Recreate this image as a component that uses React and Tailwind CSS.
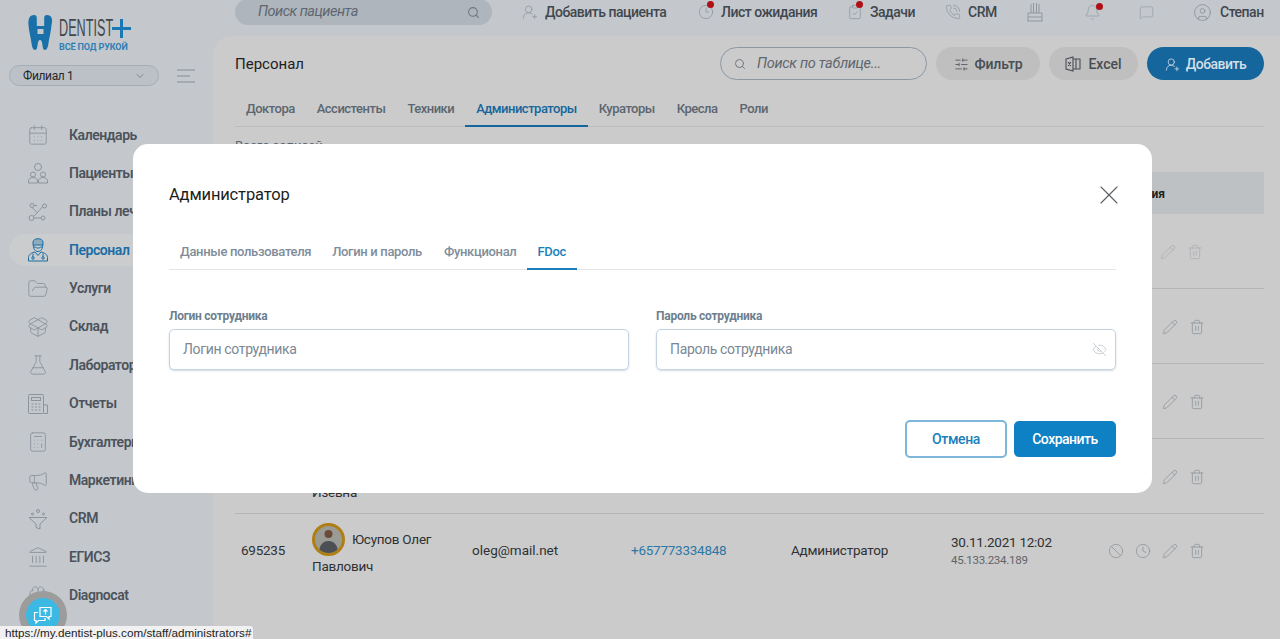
import { Search, ChevronDown, X, EyeOff, SlidersHorizontal, Pencil, Trash2, Ban, Clock, UserRoundPlus, Clock3, ClipboardCheck, PhoneCall, Bell, MessageSquare, CircleUser, CalendarDays, FolderOpen, PackageOpen, FlaskConical, Calculator, Megaphone, Landmark, Brain } from "lucide-react";

// иконки, которых нет в пакете
const PatientsIcon = (props) => (
  <svg width="22" height="22" viewBox="0 0 22 22" fill="none" stroke="currentColor" strokeWidth="1" {...props}>
    <circle cx="11" cy="5" r="3.500" />
    <circle cx="6" cy="12.500" r="2.500" />
    <circle cx="16" cy="12.500" r="2.500" />
    <path d="M1.500 21v-2c0-2 2-3.500 4.500-3.500s4.500 1.500 4.500 3.500v2zM11.500 21v-2c0-2 2-3.500 4.500-3.500s4.500 1.500 4.500 3.500v2z" />
  </svg>
);

const PlansIcon = (props) => (
  <svg width="22" height="22" viewBox="0 0 22 22" fill="none" stroke="currentColor" strokeWidth="1" {...props}>
    <circle cx="5" cy="4.500" r="2" />
    <circle cx="17.500" cy="5" r="2" />
    <circle cx="4.500" cy="17" r="2.500" />
    <circle cx="16" cy="17" r="2" />
    <path d="M7 4.500h3M15.500 6 6.500 15.500M7 17h7M5 6.500l5 5" />
  </svg>
);

const StaffIcon = (props) => (
  <svg width="22" height="24" viewBox="0 0 22 24" fill="none" stroke="currentColor" strokeWidth="1.300" {...props}>
    <path d="M6 7V4c0-2 2.500-3.300 5-3.300S16 2 16 4v3z" fill="currentColor" fillOpacity="0.35" />
    <path d="M6.300 7c0 4 2 6.500 4.700 6.500S15.700 11 15.700 7" />
    <path d="M6 9h2.500l1 1h3l1-1H16" />
    <path d="M1.500 23v-3.500c0-3 3.500-5 6.500-5.500l3 3.500 3-3.500c3 .5 6.500 2.500 6.500 5.500V23z" />
    <path d="M6 15.500V19M16 15.500V19" />
    <circle cx="6" cy="20" r="1.200" />
    <circle cx="16" cy="20" r="1.200" />
  </svg>
);

const ReportIcon = (props) => (
  <svg width="22" height="22" viewBox="0 0 22 22" fill="none" stroke="currentColor" strokeWidth="1" {...props}>
    <rect x="1.500" y="1.500" width="15" height="19" rx="1" />
    <rect x="4.500" y="4.500" width="9" height="3" />
    <path d="M4.500 11h2M8 11h2M11.500 11h2M4.500 14h2M8 14h2M11.500 14h2M4.500 17h2M8 17h2M11.500 17h2M16.500 12h4v8.500h-4" />
  </svg>
);

const FunnelIcon = (props) => (
  <svg width="22" height="22" viewBox="0 0 22 22" fill="none" stroke="currentColor" strokeWidth="1" {...props}>
    <path d="M2 9.500h18l-7 6.500v5l-4-1.500V16z" />
    <circle cx="11" cy="3" r="1.500" />
    <circle cx="5.500" cy="6" r="1" />
    <circle cx="16.500" cy="6" r="1" />
  </svg>
);

const CakeIcon = (props) => (
  <svg width="18" height="20" viewBox="0 0 18 20" fill="none" stroke="currentColor" strokeWidth="1" {...props}>
    <path d="M1.500 19h15M2 19v-8h14v8M2 15h14M5 11V2M7.500 11V1M10.500 11V1M13 11V2" />
  </svg>
);

const ExcelIcon = (props) => (
  <svg width="16" height="16" viewBox="0 0 16 16" fill="none" stroke="currentColor" strokeWidth="1.100" {...props}>
    <path d="M1 3l7-2v14l-7-2zM8 3h7v10H8M3.200 6l2.500 4M5.700 6l-2.500 4M11 3v10" />
  </svg>
);

const ChatIcon = (props) => (
  <svg width="20" height="20" viewBox="0 0 20 20" fill="none" stroke="currentColor" strokeWidth="1.200" {...props}>
    <path d="M7 2.500h11v9h-2v2.500l-2.500-2.500H7z" />
    <path d="M5 7.500H1.500v8h1.500v2.500l2.500-2.500h6.500v-2.500" />
    <path d="M12.500 4.500v5M10.500 6.500l2-2 2 2" />
  </svg>
);

const menu = [
  { label: "Календарь", icon: CalendarDays },
  { label: "Пациенты", icon: PatientsIcon },
  { label: "Планы лечения", icon: PlansIcon },
  { label: "Персонал", icon: StaffIcon, active: true },
  { label: "Услуги", icon: FolderOpen },
  { label: "Склад", icon: PackageOpen },
  { label: "Лаборатории", icon: FlaskConical },
  { label: "Отчеты", icon: ReportIcon },
  { label: "Бухгалтерия", icon: Calculator },
  { label: "Маркетинг", icon: Megaphone },
  { label: "CRM", icon: FunnelIcon },
  { label: "ЕГИСЗ", icon: Landmark },
  { label: "Diagnocat", icon: Brain },
];

const topLinks = [
  { label: "Добавить пациента", icon: UserRoundPlus, w: "w-[176px]" },
  { label: "Лист ожидания", icon: Clock3, dot: true, w: "w-[149px]" },
  { label: "Задачи", icon: ClipboardCheck, dot: true, w: "w-[98px]" },
  { label: "CRM", icon: PhoneCall, w: "w-[81px]" },
];

const RowActions = ({ full, pale }) => (
  <div className={`flex items-center justify-end gap-[11px] ${pale ? "opacity-50 pr-[2px]" : ""}`}>
    {full && <Ban size={16} className="text-[#8f979f]" strokeWidth={1.25} />}
    {full && <Clock size={16} className="text-[#8f979f]" strokeWidth={1.25} />}
    <Pencil size={16} className="text-[#8f979f]" strokeWidth={1.25} />
    <Trash2 size={16} className="text-[#8f979f]" strokeWidth={1.25} />
  </div>
);

const Avatar = () => (
  <span className="inline-flex w-[33px] h-[33px] rounded-full border-[3px] border-[#b07f14] bg-[#9b9b96] items-end justify-center overflow-hidden mr-[7px]">
    <svg width="27" height="27" viewBox="0 0 27 27">
      <circle cx="13.500" cy="8" r="4" fill="#6b4a3a" />
      <path d="M4 27c0-8 4-12 9.500-12S23 19 23 27z" fill="#4c5055" />
    </svg>
  </span>
);

const Row = ({ pale, name }) => (
  <div className="h-[75px] border-b border-[#b5b5b5] flex items-center justify-between pr-[59px] pt-[2px]">
    <div className="ml-[77px] mt-[31px] text-[13.500px] tracking-[-0.25px] text-[#2f3133]">{name}</div>
    <RowActions pale={pale} />
  </div>
);

const Field = ({ label, children }) => (
  <div>
    <div className="text-[12px] font-bold tracking-[-0.25px] text-[#6e7f8f] leading-[16px] mb-[5px]">{label}</div>
    <div className="h-[41px] border border-[#c5d3e0] rounded-[5px] pl-[13px] pr-[8px] flex items-center justify-between text-[14px] tracking-[-0.35px] text-[#7b8894] shadow-[0_1px_2px_rgba(80,110,140,0.25)]">
      <span>{label}</span>
      {children}
    </div>
  </div>
);

export default function App() {
  return (
    <div style={{ fontFamily: 'Roboto, sans-serif' }} className="relative h-[639px] w-[1280px] overflow-hidden bg-[#c4c8cd] flex">
      {/* боковое меню */}
      <aside className="w-[213px] shrink-0 pl-[9px]">
        <div className="pl-[19px] pt-[15px] h-[65px] flex items-start gap-[6px]">
          <svg width="25" height="35" viewBox="0 0 25 35">
            <path d="M6 0C1.500 0 0 4 .5 10c.5 7 2 11 3 18 .5 4 1.500 7 3.500 7s2.300-3 2.700-6c.3-2 .8-4 2.300-4s2 2 2.300 4c.4 3 .7 6 2.700 6s3-3 3.500-7c1-7 2.500-11 3-18C25 4 23.500 0 19 0c-2 0-2.800 1-2.800 3v8H8.800V3C8.800 1 8 0 6 0z" fill="#1a70a8" />
            <rect x="9.500" y="14" width="6" height="5" fill="#c4c8cd" />
          </svg>
          <div className="leading-none">
            <div className="flex items-center h-[22px] mt-[2px]">
              <div className="w-[53px] text-[23px] text-[#43474c] leading-[22px] whitespace-nowrap origin-left scale-x-[0.55]" style={{ fontFamily: '"Liberation Sans", sans-serif' }}>DENTIST</div>
              <svg width="19" height="19" viewBox="0 0 19 19">
                <path d="M8 0h3v8h8v3h-8v8H8v-8H0V8h8z" fill="#1a78b4" />
              </svg>
            </div>
            <div className="text-[9px] font-bold text-[#2e7fb5] tracking-[-0.1px] mt-[4px] whitespace-nowrap">ВСЁ ПОД РУКОЙ</div>
          </div>
        </div>
        <div className="flex items-center">
          <div className="w-[150px] h-[21px] rounded-full border border-[#a4acb5] bg-[#bcc1c8] pl-[13px] pr-[12px] flex items-center justify-between text-[12px] tracking-[-0.35px] text-[#25282b]">
            Филиал 1
            <ChevronDown size={12} className="text-[#7d858d]" />
          </div>
          <div className="ml-[18px] w-[18px] flex flex-col gap-[4px]">
            <span className="h-[2px] bg-[#a3aab2]" />
            <span className="h-[2px] bg-[#a3aab2] w-[13px]" />
            <span className="h-[2px] bg-[#a3aab2]" />
          </div>
        </div>
        <nav className="mt-[33px]">
          {menu.map((item) => (
            <div key={item.label} className={`h-[32px] mb-[6.400px] rounded-l-full flex items-center pl-[18px] gap-[20px] text-[14px] font-semibold tracking-[-0.45px] whitespace-nowrap ${item.active ? "bg-[#cacccd] text-[#1a6ea6]" : "text-[#4c535b]"}`}>
              <item.icon size={22} strokeWidth={1} className={item.active ? "text-[#1a6ea6]" : "text-[#8b939c]"} />
              {item.label}
            </div>
          ))}
        </nav>
      </aside>

      <div className="flex-1 min-w-0 flex flex-col">
        {/* верхняя панель */}
        <header className="h-[36px] shrink-0 pl-[22px] flex items-start">
          <div className="w-[257px] h-[26px] rounded-full -mt-[1px] bg-[#aeb5bc] pl-[23px] pr-[12px] flex items-center justify-between text-[14.500px] tracking-[-0.5px] italic text-[#5e6670]">
            Поиск пациента
            <Search size={13} className="text-[#6f7780]" />
          </div>
          <div className="ml-[30px] flex items-center h-[24px] text-[14px] font-medium tracking-[-0.5px] text-[#41474e]">
            {topLinks.map((l) => (
              <div key={l.label} className={`relative flex items-center gap-[7px] whitespace-nowrap ${l.w}`}>
                <l.icon size={16} strokeWidth={1} className="text-[#868e97]" />
                {l.dot && <span className="absolute left-[9px] -top-[1px] w-[7px] h-[7px] rounded-full bg-[#b01015]" />}
                {l.label}
              </div>
            ))}
            <CakeIcon className="text-[#8f979f]" />
            <div className="relative ml-[40px]">
              <Bell size={17} strokeWidth={1} className="text-[#8f979f]" />
              <span className="absolute right-[-2px] -top-[1px] w-[7px] h-[7px] rounded-full bg-[#b01015]" />
            </div>
            <MessageSquare size={15} strokeWidth={1} className="ml-[38px] text-[#8f979f]" />
            <CircleUser size={19} strokeWidth={1} className="ml-[39px] text-[#868e97]" />
            <span className="ml-[8px]">Степан</span>
          </div>
        </header>

        {/* основная часть */}
        <main className="flex-1 bg-[#cbcbcb] rounded-tl-[20px] pl-[22px] pr-[16px] pt-[11px] text-[#2a2c2e]">
          <div className="flex items-center h-[33px]">
            <div className="text-[15px] text-[#1e2022] pt-[1px]">Персонал</div>
            <div className="ml-auto flex items-center gap-[9px]">
              <div className="w-[207px] h-[33px] rounded-full border border-[#8c98a3] pl-[13px] pt-[1px] flex items-center gap-[11px] text-[14.500px] tracking-[-0.3px] italic text-[#5e666e]">
                <Search size={12} className="text-[#6f7780]" />
                Поиск по таблице...
              </div>
              <div className="w-[104px] h-[33px] pt-[1px] rounded-full bg-[#bfbfbf] flex items-center justify-center gap-[6px] text-[14px] font-medium tracking-[-0.2px] text-[#484d53]">
                <SlidersHorizontal size={15} strokeWidth={1.25} /> Фильтр
              </div>
              <div className="w-[89px] h-[33px] pt-[1px] rounded-full bg-[#bfbfbf] flex items-center justify-center gap-[7px] text-[14px] font-medium text-[#484d53]">
                <ExcelIcon /> Excel
              </div>
              <div className="w-[117px] h-[33px] pt-[1px] rounded-full bg-[#14669c] flex items-center justify-center gap-[6px] text-[14px] font-medium tracking-[-0.5px] text-[#d4dfe7]">
                <UserRoundPlus size={15} strokeWidth={1.25} /> Добавить
              </div>
            </div>
          </div>

          <div className="mt-[13px] flex border-b border-[#bcbcbc] h-[34px] text-[13px] font-medium tracking-[-0.5px] text-[#5b6670]">
            <span className="px-[11px] pt-[6px]">Доктора</span>
            <span className="px-[11px] pt-[6px]">Ассистенты</span>
            <span className="px-[11px] pt-[6px]">Техники</span>
            <span className="px-[11px] pt-[6px] text-[#14669c] border-b-2 border-[#14669c] h-[34px]">Администраторы</span>
            <span className="px-[11px] pt-[6px]">Кураторы</span>
            <span className="px-[11px] pt-[6px]">Кресла</span>
            <span className="px-[11px] pt-[6px]">Роли</span>
          </div>

          <div className="h-[45px] pt-[9px] text-[13px] leading-[20px] text-[#5b6670]">Всего записей</div>
          <div className="h-[42px] pt-[1px] bg-[#bec1c3] flex items-center justify-end pr-[99px] text-[12px] font-bold text-[#222]">
            Действия
          </div>
          <Row pale />
          <Row />
          <Row />
          <Row name="Изевна" />
          <div className="h-[76px] pb-[3px] flex items-center text-[13.500px] tracking-[-0.25px] text-[#2f3133]">
            <div className="w-[77px] pl-[6px]">695235</div>
            <div className="w-[160px] -mt-[2px]">
              <div className="flex items-center h-[34px]"><Avatar />Юсупов Олег</div>
              <div className="leading-[21px]">Павлович</div>
            </div>
            <div className="w-[159px] tracking-normal">oleg@mail.net</div>
            <div className="w-[160px] text-[#2c79a6]">+657773334848</div>
            <div className="w-[160px]">Администратор</div>
            <div className="w-[157px] leading-[18px]">
              <div>30.11.2021 12:02</div>
              <div className="text-[11.500px] text-[#5f6467]">45.133.234.189</div>
            </div>
            <RowActions full />
          </div>
        </main>
      </div>

      {/* модальное окно */}
      <div className="absolute left-[133px] top-[144px] w-[1019px] h-[349px] bg-white rounded-[15px] px-[36px] pt-[38px]">
        <div className="flex items-center justify-between h-[24px]">
          <h2 className="text-[16.500px] tracking-[-0.15px] text-[#1c1e20] pt-[2px]">Администратор</h2>
          <X size={32} strokeWidth={0.8} className="text-[#5c5f62] -mr-[9px] mt-[2px]" />
        </div>
        <div className="mt-[27px] h-[37px] flex border-b border-[#e0e5ea] text-[13px] font-medium tracking-[-0.33px] text-[#7f8d9a]">
          <span className="pl-[11px] pr-[10px] pt-[9px]">Данные пользователя</span>
          <span className="px-[11px] pt-[9px]">Логин и пароль</span>
          <span className="px-[11px] pt-[9px]">Функционал</span>
          <span className="px-[10px] pt-[9px] w-[50px] text-[#1a7fbc] border-b-2 border-[#1a7fbc] h-[37px]">FDoc</span>
        </div>
        <div className="mt-[38px] grid grid-cols-2 gap-[27px]">
          <Field label="Логин сотрудника" />
          <Field label="Пароль сотрудника">
            <EyeOff size={15} strokeWidth={1} className="text-[#a9b6c1]" />
          </Field>
        </div>
        <div className="mt-[50px] flex justify-end gap-[7px]">
          <button className="w-[102px] h-[38px] rounded-[5px] border-2 border-[#7cb6d8] text-[14px] font-medium tracking-[-0.4px] text-[#1a7fbc]">Отмена</button>
          <button className="w-[102px] h-[36px] mt-[1px] rounded-[5px] bg-[#0e80c4] text-[14px] font-medium tracking-[-0.5px] text-white">Сохранить</button>
        </div>
      </div>

      {/* кнопка чата и строка статуса браузера */}
      <div className="absolute left-[19px] top-[591px] w-[48px] h-[48px] rounded-full bg-[#9c9c9c] flex items-center justify-center">
        <div className="w-[34px] h-[34px] rounded-full bg-[#3cb9e3] flex items-center justify-center">
          <ChatIcon className="text-white" />
        </div>
      </div>
      <div className="absolute left-0 bottom-0 h-[13px] pl-[5px] pr-[2px] bg-[#f1f1f1] rounded-tr-[3px] text-[11.700px] leading-[14px] text-[#222]" style={{ fontFamily: '"Liberation Sans", sans-serif' }}>
        https://my.dentist-plus.com/staff/administrators#
      </div>
    </div>
  );
}
